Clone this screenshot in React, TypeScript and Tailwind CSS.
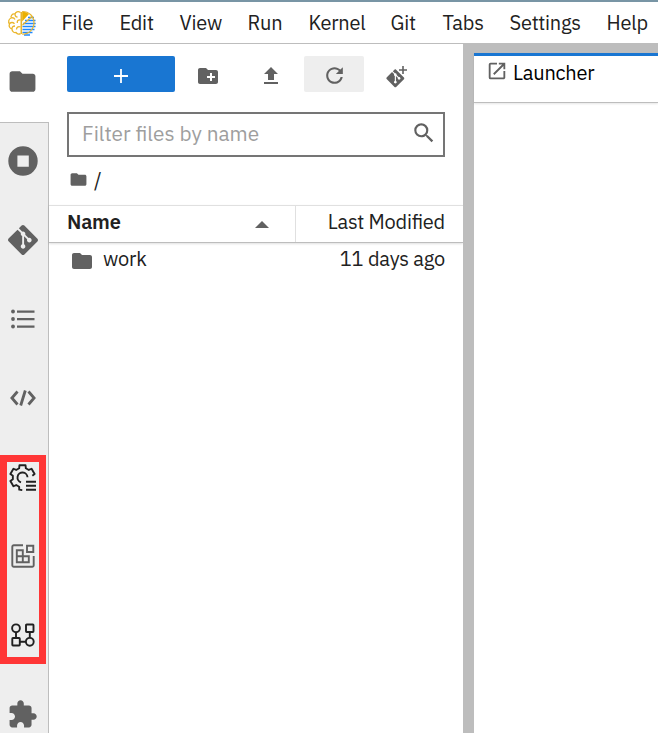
import React from 'react';

const FOLDER = 'M10 4H4c-1.1 0-1.99.9-1.99 2L2 18c0 1.1.9 2 2 2h16c1.1 0 2-.9 2-2V8c0-1.1-.9-2-2-2h-8l-2-2z';
const GIT =
  'M23.546 10.93L13.067.452c-.604-.603-1.582-.603-2.188 0L8.708 2.627l2.76 2.76c.645-.215 1.379-.07 1.889.441.516.515.658 1.258.438 1.9l2.658 2.66c.645-.223 1.387-.078 1.9.435.721.72.721 1.884 0 2.604-.719.719-1.881.719-2.6 0-.539-.541-.674-1.337-.404-1.996L12.86 8.955v6.525c.176.086.342.203.488.348.713.721.713 1.883 0 2.6-.719.721-1.889.721-2.609 0-.719-.719-.719-1.879 0-2.598.182-.18.387-.316.605-.406V8.835c-.217-.091-.424-.222-.6-.401-.545-.545-.676-1.342-.396-2.009L7.636 3.7.45 10.881c-.6.605-.6 1.584 0 2.189l10.48 10.477c.604.604 1.582.604 2.186 0l10.43-10.43c.605-.603.605-1.582 0-2.187';
const PUZZLE =
  'M20.5 11H19V7c0-1.1-.9-2-2-2h-4V3.5C13 2.12 11.88 1 10.5 1S8 2.12 8 3.5V5H4c-1.1 0-1.99.9-1.99 2v3.8H3.5c1.49 0 2.7 1.21 2.7 2.7s-1.21 2.7-2.7 2.7H2V20c0 1.1.9 2 2 2h3.8v-1.5c0-1.49 1.21-2.7 2.7-2.7 1.49 0 2.7 1.21 2.7 2.7V22H17c1.1 0 2-.9 2-2v-4h1.5c1.38 0 2.5-1.12 2.5-2.5S21.88 11 20.5 11z';

function Glyph({ d, size, className = '' }: { d: string; size: number; className?: string }) {
  return (
    <svg width={size} height={size} viewBox="0 0 24 24" className={`shrink-0 fill-[#616161] ${className}`}>
      <path d={d} />
    </svg>
  );
}

function Logo() {
  return (
    <svg width="30" height="26" viewBox="0 0 30 26" fill="none">
      <g stroke="#1e88ff" strokeWidth="1.500">
        <path d="M21 7.600h6M18 10.600h10.500M16 13.600h12.700M15.500 16.600h13M15.500 19.600h12M15.500 22.600h10M17 25h6" />
      </g>
      <path d="M15.200 1.500A11.500 11.500 0 0 1 22 4l-6.800 7.500z" fill="#eab000" />
      <path d="M15.200 1.500c7 0 11.800 5 11.800 11.300s-5 11.400-11.800 11.400" stroke="#eab62c" strokeWidth="1.200" />
      <path d="M15.500 15L25 6.500" stroke="#eab62c" strokeWidth="1.200" />
      <path d="M14.300 2v22" stroke="#eab62c" strokeWidth="1.600" />
      <path
        d="M13.500 2.500C11 .8 8.500 2 8 4 5 3.500 3.500 6 4.200 8 1.500 9 1 12 2.500 13.800 1.500 16.500 3 18.500 5 19c0 2.500 2 4 4 3.500 1.500 2 3.500 2 4.500 1M8 4c0 2 1 3 2.500 3M4.200 8c1.500-.5 3 0 3.800 1.500M2.500 13.800c1.500-1.500 3.500-1.500 5 0M5 19c-.2-2 1-3 3-3M13.500 10c-2.500-.5-3.500 1-3.200 3M13.500 17c-2.500-1-4 .5-4 2.500"
        stroke="#eab62c"
        strokeWidth="1.300"
      />
    </svg>
  );
}

function RunningIcon() {
  return (
    <svg width="30" height="30" viewBox="0 0 30 30">
      <path fillRule="evenodd" fill="#616161" d="M15 .3a14.700 14.700 0 1 0 0 29.400A14.700 14.700 0 0 0 15 .3zM9.400 9.400h11.400v11.400H9.400z" />
    </svg>
  );
}

function TocIcon() {
  return (
    <svg width="24" height="20" viewBox="0 0 24 20" fill="#616161">
      <circle cx="2" cy="2.500" r="1.900" />
      <circle cx="2" cy="10" r="1.900" />
      <circle cx="2" cy="17.500" r="1.900" />
      <path d="M6 1.400h17.500v2.300H6zM6 8.900h17.500v2.300H6zM6 16.400h17.500v2.300H6z" />
    </svg>
  );
}

function CodeIcon() {
  return (
    <svg width="26" height="18" viewBox="0 0 26 18" fill="none" stroke="#616161" strokeWidth="2.800">
      <path d="M7.500 2.500L1.900 9l5.600 6.500M18.500 2.500L24.100 9l-5.600 6.500M15.300 1.500l-4.600 15" />
    </svg>
  );
}

// Outline of a six-toothed gear, left open at its lower right.
function gearOutline() {
  const pt = (deg: number, r: number) => {
    const a = (deg * Math.PI) / 180;
    return `${(13.5 + r * Math.cos(a)).toFixed(2)} ${(13.5 + r * Math.sin(a)).toFixed(2)}`;
  };
  const pts: string[] = [pt(91, 12.6), pt(105, 12.6), pt(110, 9.8), pt(130, 9.8)];
  for (const c of [150, 210, 270, 330]) {
    pts.push(pt(c - 14, 12.6), pt(c + 14, 12.6));
    if (c !== 330) pts.push(pt(c + 20, 9.8), pt(c + 40, 9.8));
  }
  pts.push(pt(350, 10));
  return 'M' + pts.join('L');
}

function RuntimesIcon() {
  return (
    <svg width="27" height="27" viewBox="0 0 27 27" fill="none" stroke="#212121" strokeWidth="1.900" strokeLinejoin="round">
      <path d={gearOutline()} />
      <path d="M12 18.300a5 5 0 1 1 6.500-5" />
      <path d="M17 17.800h10M17 21.800h10M17 25.800h10" />
    </svg>
  );
}

function SnippetsIcon() {
  return (
    <svg width="24" height="24" viewBox="0 0 24 24" fill="none" stroke="#616161" strokeWidth="1.900">
      <path d="M12 1.300H2.800A1.500 1.500 0 0 0 1.300 2.800v18.400a1.500 1.500 0 0 0 1.500 1.500h18.400a1.500 1.500 0 0 0 1.500-1.500V12" />
      <path d="M16 1.700h6.300V8H16zM5.800 6.300h6v6h-6zM5.800 12.300h6v6h-6zM11.800 12.300h6v6h-6z" />
    </svg>
  );
}

function PipelineIcon() {
  return (
    <svg width="24" height="24" viewBox="0 0 24 24" fill="none" stroke="#212121" strokeWidth="1.900">
      <circle cx="5" cy="5.300" r="3.900" />
      <rect x="15" y="1.500" width="7.500" height="7.500" rx=".7" />
      <rect x="1.300" y="15" width="7.500" height="7.500" rx=".7" />
      <circle cx="18.800" cy="18.800" r="3.900" />
      <path d="M5 9.200V15M18.800 9v5.900M8.800 18.800h6.100" />
    </svg>
  );
}

const MENU = [
  { label: 'File', cls: 'w-[58px]' },
  { label: 'Edit', cls: 'w-[60px]' },
  { label: 'View', cls: 'w-[68px]' },
  { label: 'Run', cls: 'w-[61px]' },
  { label: 'Kernel', cls: 'w-[82px]' },
  { label: 'Git', cls: 'w-[52px]' },
  { label: 'Tabs', cls: 'w-[67px]' },
  { label: 'Settings', cls: 'w-[97px]' },
  { label: 'Help', cls: 'w-[51px]' },
];

const SIDE: React.ReactNode[] = [
  <RunningIcon />,
  <Glyph d={GIT} size={30} />,
  <TocIcon />,
  <CodeIcon />,
  <RuntimesIcon />,
  <SnippetsIcon />,
  <PipelineIcon />,
  <Glyph d={PUZZLE} size={31} />,
];

export default function App() {
  return (
    <div className="relative flex h-[733px] w-[658px] flex-col overflow-hidden bg-white font-['IBM_Plex_Sans','Noto_Sans',sans-serif] text-[20px] leading-[28px] tracking-[-0.22px] text-[#212121] [font-feature-settings:'liga'_1]">
      <header className="flex h-[44px] shrink-0 items-center border-t-2 border-b border-t-[#7895a5] border-b-[#bdbdbd]">
        <div className="w-[61.500px] shrink-0 pl-[7px]">
          <Logo />
        </div>
        {MENU.map((m) => (
          <span key={m.label} className={`shrink-0 whitespace-nowrap ${m.cls}`}>
            {m.label}
          </span>
        ))}
      </header>

      <div className="flex min-h-0 flex-1">
        <nav className="flex w-[49px] shrink-0 flex-col">
          <div className="flex h-[78px] shrink-0 items-center justify-center pr-[4px] pb-[3px]">
            <Glyph d={FOLDER} size={31} />
          </div>
          <div className="flex min-h-0 flex-1 flex-col overflow-hidden border-t border-r border-[#bdbdbd] bg-[#eeeeee]">
            {SIDE.map((icon, i) => (
              <div key={i} className="flex h-[79px] shrink-0 items-center justify-center pr-[3px] pb-[3px]">
                {icon}
              </div>
            ))}
          </div>
        </nav>

        <aside className="flex w-[414px] shrink-0 flex-col">
          <div className="flex h-[48px] shrink-0 items-end pl-[18px]">
            <button className="flex h-9 w-[108px] items-center justify-center rounded-[2px] bg-[#1976d2]">
              <svg width="14" height="14" viewBox="0 0 14 14" className="mt-1" stroke="#fff" strokeWidth="1.800">
                <path d="M7 0v14M0 7h14" />
              </svg>
            </button>
            <div className="flex h-9 w-[66px] items-center justify-center pt-1">
              <Glyph
                size={24}
                d="M20 6h-8l-2-2H4c-1.110 0-1.990.89-1.990 2L2 18c0 1.110.89 2 2 2h16c1.110 0 2-.89 2-2V8c0-1.110-.89-2-2-2zm-1 8h-3v3h-2v-3h-3v-2h3V9h2v3h3v2z"
              />
            </div>
            <div className="flex h-9 w-[63px] items-center justify-center pt-[3px] pr-[3px]">
              <Glyph size={24} d="M5 20h14v-2H5v2zM5 10h4v6h6v-6h4l-7-7-7 7z" />
            </div>
            <button className="flex h-9 w-[60px] items-center justify-center rounded-[2px] bg-[#eeeeee] pt-[3px]">
              <svg width="25" height="25" viewBox="0 0 18 18" fill="#616161">
                <path d="M9 13.500c-2.490 0-4.500-2.010-4.500-4.500S6.510 4.500 9 4.500c1.240 0 2.360.52 3.170 1.330L10 8h5V3l-1.760 1.760C12.150 3.680 10.660 3 9 3 5.690 3 3.010 5.690 3.010 9S5.690 15 9 15c2.970 0 5.430-2.160 5.900-5h-1.520c-.46 2-2.240 3.500-4.380 3.500z" />
              </svg>
            </button>
            <div className="flex h-9 w-[64px] items-center justify-center pt-[5px]">
              <svg width="21" height="22" viewBox="0 0 21 22" fill="#616161">
                <path transform="translate(.3 3.300) scale(.75)" d={GIT} />
                <path d="M16.200 0h1.600v3.200H21v1.600h-3.200V8h-1.600V4.800H13V3.200h3.200z" />
              </svg>
            </div>
          </div>

          <div className="mt-5 ml-[18px] flex h-[45px] w-[378px] shrink-0 items-center justify-between border-2 border-[#757575] pr-[6px] pb-[1px] pl-[13px]">
            <span className="text-[20.800px] tracking-normal text-[#9e9e9e]">Filter files by name</span>
            <Glyph
              size={26}
              className="mb-[3px]"
              d="M15.500 14h-.79l-.28-.27A6.471 6.471 0 0 0 16 9.500 6.500 6.500 0 1 0 9.500 16c1.610 0 3.090-.59 4.230-1.570l.27.28v.79l5 4.990L20.490 19l-4.990-5zm-6 0C7.010 14 5 11.990 5 9.500S7.010 5 9.500 5 14 7.010 14 9.500 11.990 14 9.500 14z"
            />
          </div>

          <div className="flex h-[48px] shrink-0 items-center pb-[3px] pl-[20px]">
            <Glyph d={FOLDER} size={19} className="mb-[1px]" />
            <span className="ml-[6px]">/</span>
          </div>

          <div className="flex h-[38px] shrink-0 border-t border-b border-t-[#e0e0e0] border-b-[#bdbdbd] shadow-[0_1px_2px_rgba(0,0,0,0.12)]">
            <div className="flex w-[247px] items-center justify-between border-r border-[#e0e0e0] pr-[26px] pb-[4px] pl-[18px] font-semibold">
              <span>Name</span>
              <span className="mt-1 border-x-[7px] border-b-[7px] border-x-transparent border-b-[#616161]" />
            </div>
            <div className="flex flex-1 items-center justify-end pr-[18px] pb-[4px]">Last Modified</div>
          </div>

          <div className="flex h-[34px] items-center pr-[18px] pb-[2px] pl-[21px]">
            <Glyph d={FOLDER} size={24} className="mt-1" />
            <span className="ml-[9px]">work</span>
            <span className="ml-auto">11 days ago</span>
          </div>
        </aside>

        <div className="w-[11px] shrink-0 bg-[#bdbdbd]" />

        <main className="flex min-w-0 flex-1 flex-col">
          <div className="h-[9px] shrink-0 bg-[#bdbdbd]" />
          <div className="flex h-[50px] shrink-0 items-center border-t-[3px] border-b border-t-[#1976d2] border-b-[#bdbdbd] pb-[13px] pl-[12px] text-black shadow-[0_1px_2px_rgba(0,0,0,0.1)]">
            <Glyph
              size={22}
              className="mb-[3px]"
              d="M19 19H5V5h7V3H5a2 2 0 0 0-2 2v14a2 2 0 0 0 2 2h14c1.100 0 2-.9 2-2v-7h-2v7zM14 3v2h3.590l-9.830 9.830 1.410 1.410L19 6.410V10h2V3h-7z"
            />
            <span className="ml-[5px]">Launcher</span>
          </div>
        </main>
      </div>

      {/* Highlight frame drawn over the three extension tabs */}
      <div className="absolute top-[455px] left-0 h-[209px] w-[46px] border-[7px] border-[#ff3636]" />
    </div>
  );
}
